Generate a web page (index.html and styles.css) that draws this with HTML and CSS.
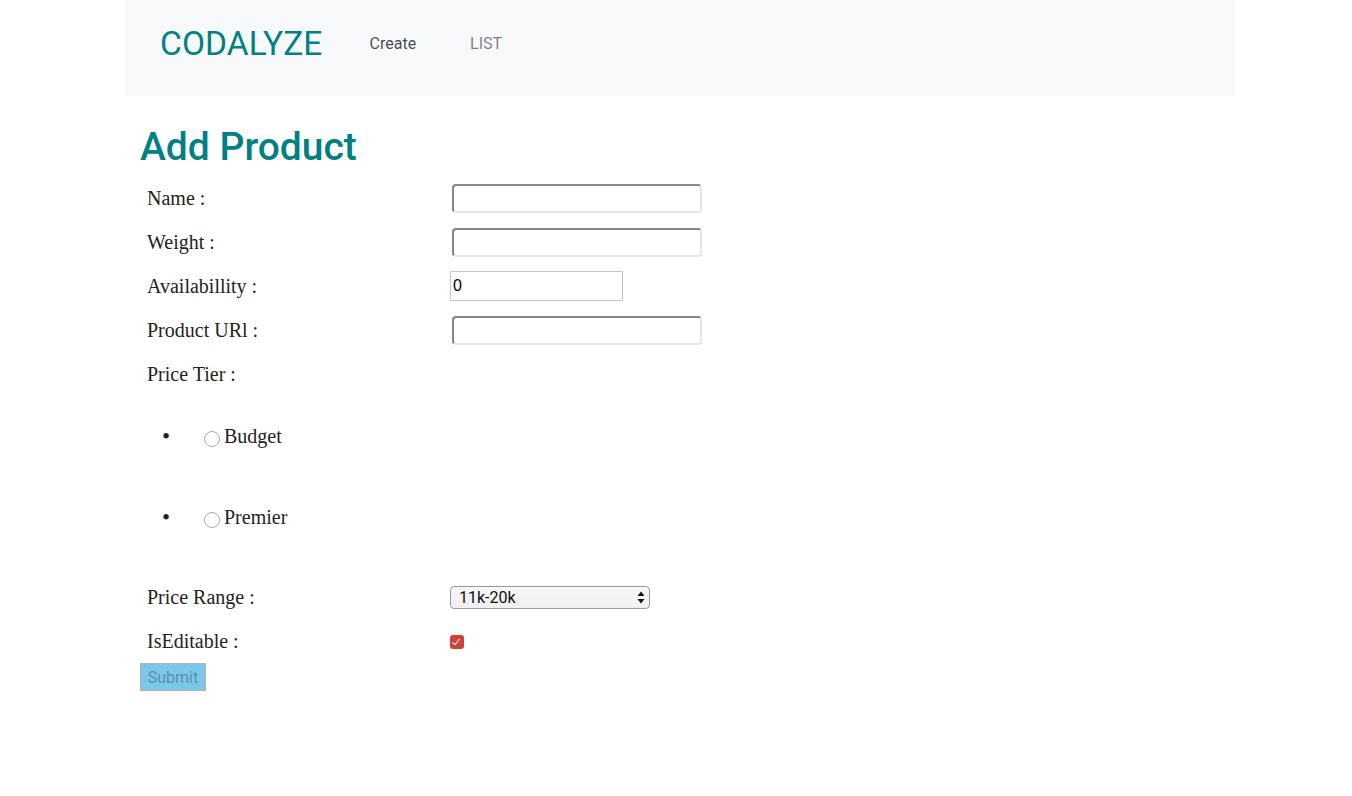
FILE: index.html
```html
<!DOCTYPE html>
<html>
<head>
<meta charset="utf-8">
<title>Codalyze</title>
<link rel="stylesheet" href="styles.css">
</head>
<body>
<div class="page">
  <nav class="navbar">
    <a class="brand" href="#">CODALYZE</a>
    <a class="nav-link active" href="#">Create</a>
    <a class="nav-link" href="#">LIST</a>
  </nav>
  <main class="content">
    <h1 class="title">Add Product</h1>
    <form class="form">
      <div class="row">
        <label class="lbl">Name :</label>
        <input class="field" type="text">
      </div>
      <div class="row">
        <label class="lbl">Weight :</label>
        <input class="field" type="text">
      </div>
      <div class="row">
        <label class="lbl">Availabillity :</label>
        <input class="num" type="text" value="0">
      </div>
      <div class="row">
        <label class="lbl">Product URl :</label>
        <input class="field" type="text">
      </div>
      <div class="row">
        <label class="lbl">Price Tier :</label>
        <span></span>
      </div>
      <ul class="tiers">
        <li><input class="radio" type="radio" name="tier"><span class="rtext">Budget</span></li>
        <li><input class="radio" type="radio" name="tier"><span class="rtext">Premier</span></li>
      </ul>
      <div class="row">
        <label class="lbl">Price Range :</label>
        <span class="select-wrap">
          <select class="select">
            <option>11k-20k</option>
          </select>
          <svg class="arrows" width="8" height="13" viewBox="0 0 8 13"><path d="M4 0.5 L7.5 5 L0.5 5 Z M4 12.5 L7.5 8 L0.5 8 Z" fill="#111"/></svg>
        </span>
      </div>
      <div class="row">
        <label class="lbl">IsEditable :</label>
        <input class="check" type="checkbox" checked>
      </div>
      <button class="submit" type="button">Submit</button>
    </form>
  </main>
</div>
</body>
</html>
```
FILE: styles.css
```css
html, body {
  margin: 0;
  padding: 0;
  background: #ffffff;
}

.page {
  width: 1110px;
  margin-left: 125px;
}

.navbar {
  height: 96px;
  box-sizing: border-box;
  background: #f8f9fa;
  display: flex;
  align-items: center;
  padding: 0 0 10px 35px;
  font-family: Roboto, "Liberation Sans", sans-serif;
}

.brand {
  color: #008080;
  font-size: 33.5px;
  text-decoration: none;
  margin-right: 47px;
  letter-spacing: 0.1px;
}

.nav-link {
  font-size: 16px;
  color: rgba(0, 0, 0, 0.5);
  text-decoration: none;
  margin-right: 54px;
}

.nav-link.active {
  color: rgba(0, 0, 0, 0.72);
}

.content {
  padding-left: 15px;
}

.title {
  font-family: Roboto, "Liberation Sans", sans-serif;
  font-weight: 500;
  color: #008080;
  font-size: 39px;
  line-height: 52px;
  margin: 25px 0 3px 0;
}

.form {
  font-family: "Liberation Serif", "Times New Roman", serif;
  font-size: 20px;
  color: #222;
}

.row {
  display: grid;
  grid-template-columns: 303px auto;
  align-items: center;
  justify-items: start;
  height: 44px;
  padding-left: 7px;
}

.lbl {
  line-height: 23px;
}

.field {
  width: 250px;
  height: 29px;
  box-sizing: border-box;
  margin-left: 2px;
  border: 2px solid;
  border-color: #868686 #e6e6e6 #e6e6e6 #868686;
  border-radius: 4px;
  background: #fff;
  padding: 0 4px;
  font-size: 16px;
}

.num {
  width: 173px;
  height: 30px;
  box-sizing: border-box;
  border: 1px solid #c6c6c6;
  padding: 0 2px;
  font-family: "Liberation Sans", Arial, sans-serif;
  font-size: 16px;
  color: #000;
  background: #fff;
}

.tiers {
  margin: 0 0 17px 0;
  padding: 0 0 0 22px;
  list-style: none;
}

.tiers li {
  padding: 29px 0;
  line-height: 23px;
  height: 23px;
}

.tiers li::before {
  content: "\2022";
  display: inline-block;
  width: 42px;
  font-size: 23px;
  line-height: 23px;
  vertical-align: top;
}

.radio {
  appearance: none;
  -webkit-appearance: none;
  width: 16px;
  height: 16px;
  box-sizing: border-box;
  border: 1px solid #a9a9a9;
  border-radius: 50%;
  margin: 0 4px 0 0;
  vertical-align: -4px;
  background: #fff;
}

.select-wrap {
  position: relative;
  display: inline-block;
}

.select {
  appearance: none;
  -webkit-appearance: none;
  width: 200px;
  height: 23px;
  box-sizing: border-box;
  border: 1px solid #9a9a9a;
  border-radius: 4px;
  background: linear-gradient(#f7f7f7, #f0f0f0);
  font-family: Roboto, "Liberation Sans", sans-serif;
  font-size: 16px;
  color: #111;
  padding: 0 0 0 8px;
  line-height: 21px;
  display: block;
}

.arrows {
  position: absolute;
  right: 5px;
  top: 5px;
}

.check {
  appearance: none;
  -webkit-appearance: none;
  width: 14px;
  height: 14px;
  margin: 2px 0 0 0;
  border-radius: 3px;
  background: #d0413a;
  position: relative;
}

.check::after {
  content: "";
  position: absolute;
  left: 4px;
  top: 1.5px;
  width: 3px;
  height: 7px;
  border: solid #fff;
  border-width: 0 1.6px 1.6px 0;
  transform: rotate(40deg);
}

.submit {
  display: block;
  width: 66px;
  height: 28px;
  margin: 0;
  padding: 0;
  box-sizing: border-box;
  background: #7ac7e9;
  border: 1px solid #b3b3b3;
  font-family: Roboto, "Liberation Sans", sans-serif;
  font-size: 16px;
  color: #5b92ad;
}
```
